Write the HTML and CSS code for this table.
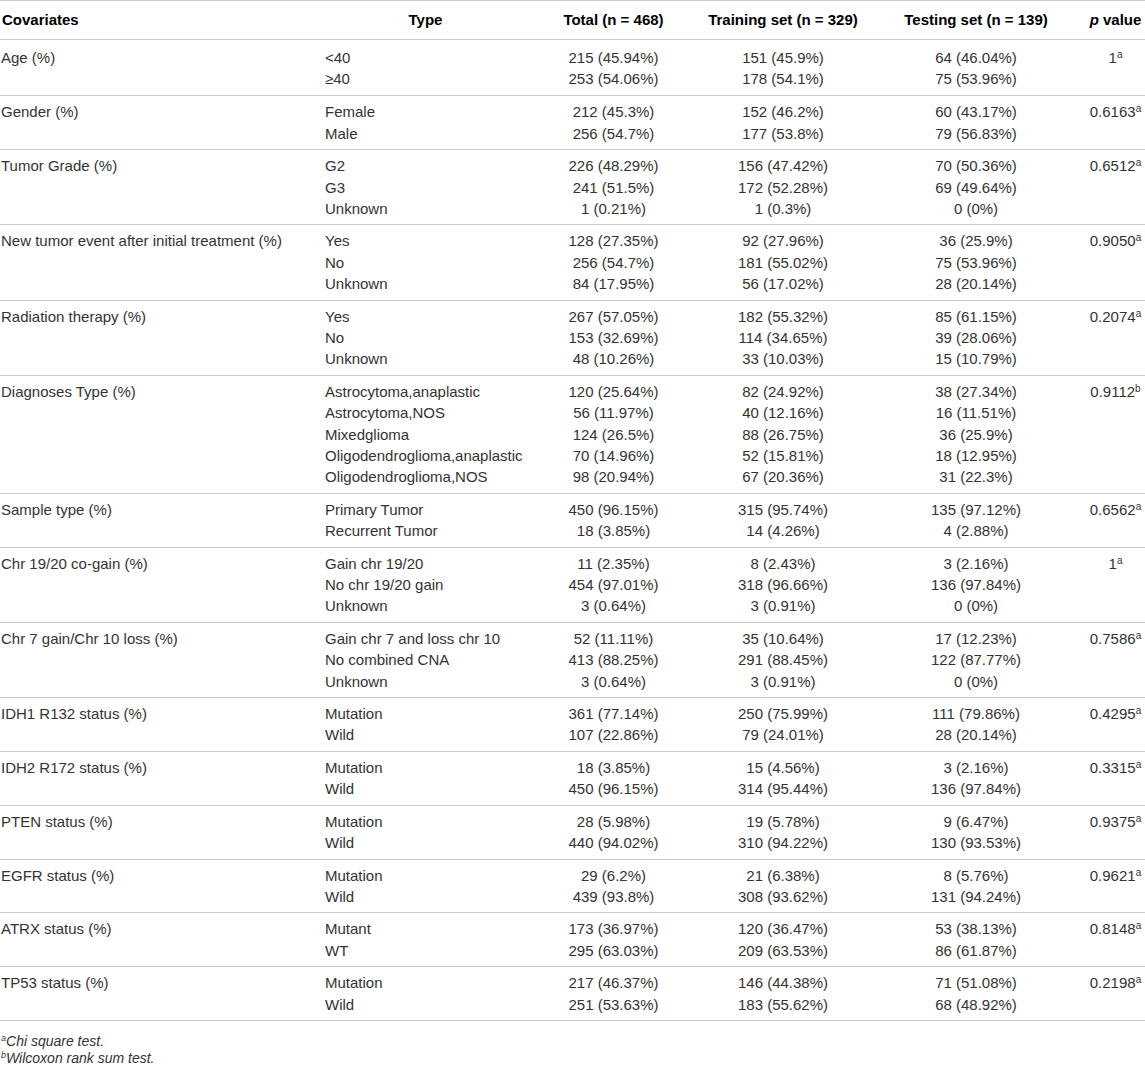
FILE: index.html
```html
<!DOCTYPE html>
<html lang="en">
<head>
<meta charset="utf-8">
<title>Covariates table</title>
<link rel="stylesheet" href="styles.css">
</head>
<body>
<table class="cov">
  <colgroup>
    <col class="c1"><col class="c2"><col class="c3"><col class="c4"><col class="c5"><col class="c6">
  </colgroup>
  <thead>
    <tr>
      <th class="left">Covariates</th>
      <th>Type</th>
      <th>Total (n = 468)</th>
      <th>Training set (n = 329)</th>
      <th>Testing set (n = 139)</th>
      <th><i>p</i> value</th>
    </tr>
  </thead>
  <tbody>
    <tr>
      <td class="name">Age (%)</td>
      <td class="type">&lt;40<br>&ge;40</td>
      <td>215 (45.94%)<br>253 (54.06%)</td>
      <td>151 (45.9%)<br>178 (54.1%)</td>
      <td>64 (46.04%)<br>75 (53.96%)</td>
      <td>1<sup>a</sup></td>
    </tr>
    <tr>
      <td class="name">Gender (%)</td>
      <td class="type">Female<br>Male</td>
      <td>212 (45.3%)<br>256 (54.7%)</td>
      <td>152 (46.2%)<br>177 (53.8%)</td>
      <td>60 (43.17%)<br>79 (56.83%)</td>
      <td>0.6163<sup>a</sup></td>
    </tr>
    <tr>
      <td class="name">Tumor Grade (%)</td>
      <td class="type">G2<br>G3<br>Unknown</td>
      <td>226 (48.29%)<br>241 (51.5%)<br>1 (0.21%)</td>
      <td>156 (47.42%)<br>172 (52.28%)<br>1 (0.3%)</td>
      <td>70 (50.36%)<br>69 (49.64%)<br>0 (0%)</td>
      <td>0.6512<sup>a</sup></td>
    </tr>
    <tr>
      <td class="name">New tumor event after initial treatment (%)</td>
      <td class="type">Yes<br>No<br>Unknown</td>
      <td>128 (27.35%)<br>256 (54.7%)<br>84 (17.95%)</td>
      <td>92 (27.96%)<br>181 (55.02%)<br>56 (17.02%)</td>
      <td>36 (25.9%)<br>75 (53.96%)<br>28 (20.14%)</td>
      <td>0.9050<sup>a</sup></td>
    </tr>
    <tr>
      <td class="name">Radiation therapy (%)</td>
      <td class="type">Yes<br>No<br>Unknown</td>
      <td>267 (57.05%)<br>153 (32.69%)<br>48 (10.26%)</td>
      <td>182 (55.32%)<br>114 (34.65%)<br>33 (10.03%)</td>
      <td>85 (61.15%)<br>39 (28.06%)<br>15 (10.79%)</td>
      <td>0.2074<sup>a</sup></td>
    </tr>
    <tr>
      <td class="name">Diagnoses Type (%)</td>
      <td class="type">Astrocytoma,anaplastic<br>Astrocytoma,NOS<br>Mixedglioma<br>Oligodendroglioma,anaplastic<br>Oligodendroglioma,NOS</td>
      <td>120 (25.64%)<br>56 (11.97%)<br>124 (26.5%)<br>70 (14.96%)<br>98 (20.94%)</td>
      <td>82 (24.92%)<br>40 (12.16%)<br>88 (26.75%)<br>52 (15.81%)<br>67 (20.36%)</td>
      <td>38 (27.34%)<br>16 (11.51%)<br>36 (25.9%)<br>18 (12.95%)<br>31 (22.3%)</td>
      <td>0.9112<sup>b</sup></td>
    </tr>
    <tr>
      <td class="name">Sample type (%)</td>
      <td class="type">Primary Tumor<br>Recurrent Tumor</td>
      <td>450 (96.15%)<br>18 (3.85%)</td>
      <td>315 (95.74%)<br>14 (4.26%)</td>
      <td>135 (97.12%)<br>4 (2.88%)</td>
      <td>0.6562<sup>a</sup></td>
    </tr>
    <tr>
      <td class="name">Chr 19/20 co-gain (%)</td>
      <td class="type">Gain chr 19/20<br>No chr 19/20 gain<br>Unknown</td>
      <td>11 (2.35%)<br>454 (97.01%)<br>3 (0.64%)</td>
      <td>8 (2.43%)<br>318 (96.66%)<br>3 (0.91%)</td>
      <td>3 (2.16%)<br>136 (97.84%)<br>0 (0%)</td>
      <td>1<sup>a</sup></td>
    </tr>
    <tr>
      <td class="name">Chr 7 gain/Chr 10 loss (%)</td>
      <td class="type">Gain chr 7 and loss chr 10<br>No combined CNA<br>Unknown</td>
      <td>52 (11.11%)<br>413 (88.25%)<br>3 (0.64%)</td>
      <td>35 (10.64%)<br>291 (88.45%)<br>3 (0.91%)</td>
      <td>17 (12.23%)<br>122 (87.77%)<br>0 (0%)</td>
      <td>0.7586<sup>a</sup></td>
    </tr>
    <tr>
      <td class="name">IDH1 R132 status (%)</td>
      <td class="type">Mutation<br>Wild</td>
      <td>361 (77.14%)<br>107 (22.86%)</td>
      <td>250 (75.99%)<br>79 (24.01%)</td>
      <td>111 (79.86%)<br>28 (20.14%)</td>
      <td>0.4295<sup>a</sup></td>
    </tr>
    <tr>
      <td class="name">IDH2 R172 status (%)</td>
      <td class="type">Mutation<br>Wild</td>
      <td>18 (3.85%)<br>450 (96.15%)</td>
      <td>15 (4.56%)<br>314 (95.44%)</td>
      <td>3 (2.16%)<br>136 (97.84%)</td>
      <td>0.3315<sup>a</sup></td>
    </tr>
    <tr>
      <td class="name">PTEN status (%)</td>
      <td class="type">Mutation<br>Wild</td>
      <td>28 (5.98%)<br>440 (94.02%)</td>
      <td>19 (5.78%)<br>310 (94.22%)</td>
      <td>9 (6.47%)<br>130 (93.53%)</td>
      <td>0.9375<sup>a</sup></td>
    </tr>
    <tr>
      <td class="name">EGFR status (%)</td>
      <td class="type">Mutation<br>Wild</td>
      <td>29 (6.2%)<br>439 (93.8%)</td>
      <td>21 (6.38%)<br>308 (93.62%)</td>
      <td>8 (5.76%)<br>131 (94.24%)</td>
      <td>0.9621<sup>a</sup></td>
    </tr>
    <tr>
      <td class="name">ATRX status (%)</td>
      <td class="type">Mutant<br>WT</td>
      <td>173 (36.97%)<br>295 (63.03%)</td>
      <td>120 (36.47%)<br>209 (63.53%)</td>
      <td>53 (38.13%)<br>86 (61.87%)</td>
      <td>0.8148<sup>a</sup></td>
    </tr>
    <tr>
      <td class="name">TP53 status (%)</td>
      <td class="type">Mutation<br>Wild</td>
      <td>217 (46.37%)<br>251 (53.63%)</td>
      <td>146 (44.38%)<br>183 (55.62%)</td>
      <td>71 (51.08%)<br>68 (48.92%)</td>
      <td>0.2198<sup>a</sup></td>
    </tr>
  </tbody>
</table>
<div class="notes">
  <p><sup>a</sup>Chi square test.</p>
  <p><sup>b</sup>Wilcoxon rank sum test.</p>
</div>
</body>
</html>
```

FILE: styles.css
```css
html, body {
  margin: 0;
  padding: 0;
  background: #ffffff;
}

body {
  font-family: "Liberation Sans", Arial, Helvetica, sans-serif;
  font-size: 15px;
  color: #333333;
}

.cov {
  width: 1145px;
  border-collapse: collapse;
  table-layout: fixed;
}

.c1 { width: 324px; }
.c2 { width: 203px; }
.c3 { width: 173px; }
.c4 { width: 166px; }
.c5 { width: 220px; }
.c6 { width: 59px; }

.cov th {
  font-weight: bold;
  color: #000000;
  text-align: center;
  line-height: 21.5px;
  padding: 8px 0 8px 0;
  white-space: nowrap;
  border-top: 1px solid #cccccc;
  border-bottom: 1px solid #cccccc;
}

.cov th.left {
  text-align: left;
  padding-left: 2px;
}

.cov td {
  line-height: 21.4px;
  padding: 5px 0;
  text-align: center;
  vertical-align: top;
  white-space: nowrap;
  border-bottom: 1px solid #cccccc;
}

.cov td.name {
  text-align: left;
  padding-left: 1px;
}

.cov td.type {
  text-align: left;
  padding-left: 1px;
}

.cov tbody tr:first-child td {
  padding-top: 7px;
  padding-bottom: 6px;
}

sup {
  font-size: 10px;
  line-height: 0;
  vertical-align: 5px;
}

.notes {
  margin-top: 12px;
  font-style: italic;
  font-size: 14px;
  line-height: 17px;
  color: #333333;
}

.notes p {
  margin: 0;
  padding-left: 1px;
}

.notes sup {
  font-size: 9px;
  vertical-align: 5px;
}
```
